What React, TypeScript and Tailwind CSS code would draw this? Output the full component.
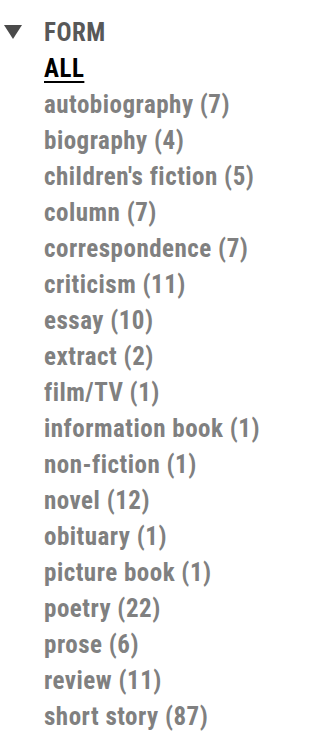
const ITEMS = [
  "autobiography (7)",
  "biography (4)",
  "children's fiction (5)",
  "column (7)",
  "correspondence (7)",
  "criticism (11)",
  "essay (10)",
  "extract (2)",
  "film/TV (1)",
  "information book (1)",
  "non-fiction (1)",
  "novel (12)",
  "obituary (1)",
  "picture book (1)",
  "poetry (22)",
  "prose (6)",
  "review (11)",
  "short story (87)",
];

export default function App() {
  return (
    <div className="min-h-screen bg-white pt-[15px] font-['Roboto_Condensed','Roboto',sans-serif] [font-stretch:condensed] font-bold text-[25px] leading-[36px] tracking-[0.5px]">
      <div className="flex items-center">
        <svg className="ml-[4px] mr-[22px] w-[18px] h-[14px] -mt-[3px]" viewBox="0 0 18 14">
          <polygon points="0,0 18,0 9,14" fill="#4a4a4a" />
        </svg>
        <span className="text-[#585858]">FORM</span>
      </div>
      <ul className="pl-[44px]">
        <li>
          <a className="text-black underline underline-offset-[4px] decoration-2">ALL</a>
        </li>
        {ITEMS.map((item) => (
          <li key={item} className="text-[#808080]">
            {item}
          </li>
        ))}
      </ul>
    </div>
  );
}
